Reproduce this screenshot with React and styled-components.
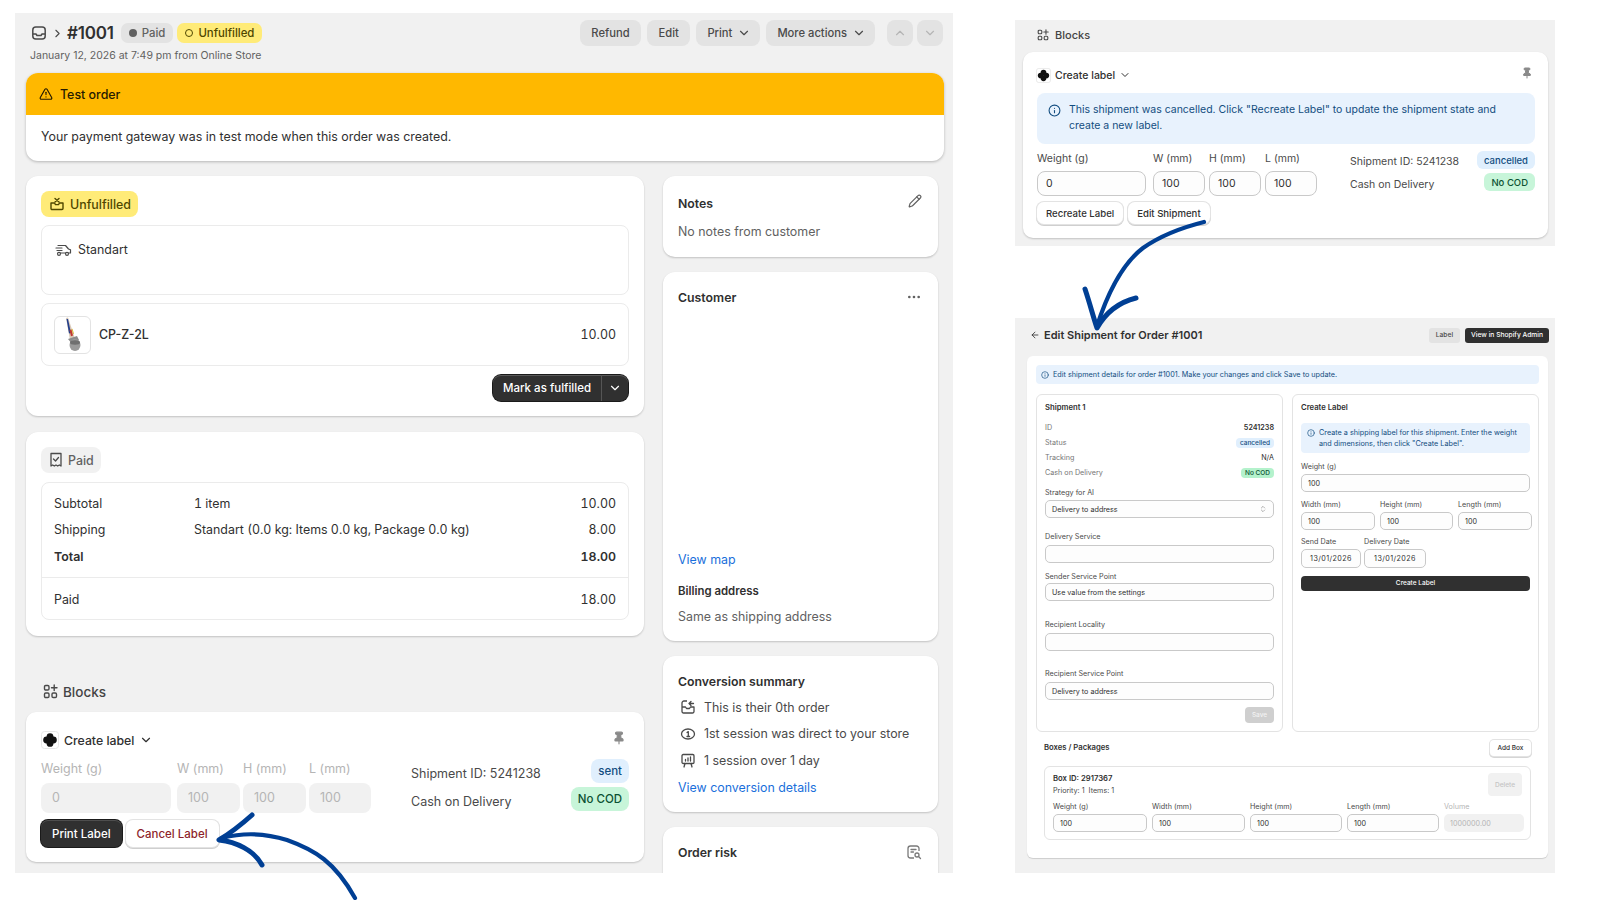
import React from 'react'
import styled, { createGlobalStyle } from 'styled-components'
import {
  ArrowLeft,
  ChevronDown,
  ChevronRight,
  ChevronUp,
  ChevronsUpDown,
  Ellipsis,
  Info,
  Pencil,
  Pin,
  TriangleAlert,
} from 'lucide-react'

const GlobalStyle = createGlobalStyle`
  html, body {
    margin: 0;
    background: #fff;
    overflow: hidden;
  }
  * {
    box-sizing: border-box;
  }
  body {
    font-family: Inter, "Noto Sans", "Liberation Sans", sans-serif;
    color: #303030;
  }
`

const Page = styled.div`
  position: relative;
  width: 1600px;
  height: 900px;
  display: flex;
  padding: 13px 0 0 15px;
`
const OrderShot = styled.div`
  width: 938px;
  height: 860px;
  background: #f1f1f1;
  padding: 7px 9px 0 11px;
  overflow: hidden;
`
const Topbar = styled.div`
  display: flex;
  align-items: flex-start;
  justify-content: space-between;
  height: 53px;
`
const TitleRow = styled.div`
  display: flex;
  align-items: center;
  height: 26px;
  padding-left: 4px;
  color: #4a4a4a;
`
const OrderNo = styled.span`
  font-size: 17px;
  font-weight: 600;
  letter-spacing: -0.2px;
  color: #303030;
  margin: 0 7px 0 3px;
`
const Pill = styled.span`
  display: inline-flex;
  align-items: center;
  gap: 5px;
  height: 20px;
  padding: 0 8px;
  margin-right: 4px;
  border-radius: 7px;
  font-size: 11.4px;
  font-weight: 500;
  background: ${p => (p.$yellow ? '#ffeb78' : '#e3e3e3')};
  color: ${p => (p.$yellow ? '#4f4700' : '#616161')};
`
const Dot = styled.i`
  width: 8px;
  height: 8px;
  border-radius: 50%;
  background: ${p => (p.$ring ? 'transparent' : '#616161')};
  border: ${p => (p.$ring ? '1.6px solid #4f4700' : 'none')};
`
const Meta = styled.div`
  font-size: 10.5px;
  color: #616161;
  padding-left: 4px;
  margin-top: 3px;
`
const Actions = styled.div`
  display: flex;
  gap: 6px;
  padding-right: 1px;
`
const ActionBtn = styled.span`
  display: inline-flex;
  align-items: center;
  justify-content: center;
  gap: 5px;
  height: 26px;
  padding: ${p => (p.$icon ? '0' : p.$menu ? '0 9px 0 11px' : '0 11.5px')};
  width: ${p => (p.$icon ? '26px' : 'auto')};
  margin-left: ${p => p.$ml || '0'};
  border-radius: 8px;
  background: #e3e3e3;
  font-size: 11.2px;
  font-weight: 550;
  color: ${p => (p.$icon ? '#b5b5b5' : '#4a4a4a')};
`
const Banner = styled.div`
  width: 918px;
  border-radius: 12px;
  background: #fff;
  overflow: hidden;
  box-shadow: 0 1px 3px rgba(0, 0, 0, 0.25);
`
const BannerHead = styled.div`
  display: flex;
  align-items: center;
  gap: 7px;
  height: 42px;
  padding-left: 13px;
  background: #ffb800;
  font-size: 12.4px;
  font-weight: 550;
  color: #251a00;
`
const BannerBody = styled.div`
  height: 46px;
  padding-top: 14px;
  font-size: 12.4px;
  padding-left: 15px;
`
const Columns = styled.div`
  display: flex;
  gap: 19px;
  margin-top: 15px;
`
const Main = styled.div`
  width: 618px;
`
const Side = styled.div`
  width: 275px;
  display: flex;
  flex-direction: column;
  gap: 15px;
`
const Card = styled.div`
  background: #fff;
  border-radius: 12px;
  box-shadow: 0 1px 2px rgba(0, 0, 0, 0.2);
  padding: ${p => p.$pad || '15px'};
  height: ${p => p.$h || 'auto'};
  margin-bottom: ${p => p.$mb || '0'};
`
const StatusTag = styled.div`
  display: inline-flex;
  align-items: center;
  gap: 5px;
  height: 26px;
  padding: 0 7px 0 8px;
  border-radius: 8px;
  font-size: 12.4px;
  font-weight: 500;
  background: ${p => (p.$yellow ? '#ffeb78' : '#f1f1f1')};
  color: ${p => (p.$yellow ? '#4f4700' : '#616161')};
`
const Inset = styled.div`
  border: 1px solid #ebebeb;
  border-radius: 8px;
  margin-top: ${p => p.$mt || '8px'};
  height: ${p => p.$h || 'auto'};
  font-size: 12.4px;
`
const ShipMethod = styled.div`
  display: flex;
  align-items: center;
  gap: 6px;
  padding: 16px 0 0 13px;
`
const ItemRow = styled.div`
  display: flex;
  align-items: center;
  height: 100%;
  padding: 0 12px;
  font-weight: 500;
`
const Thumb = styled.div`
  width: 37px;
  height: 38px;
  border: 1px solid #e3e3e3;
  border-radius: 6px;
  margin-right: 8px;
  display: flex;
  align-items: center;
  justify-content: center;
`
const Amount = styled.span`
  margin-left: auto;
  font-weight: 400;
  font-variant-numeric: tabular-nums;
`
const FulfilWrap = styled.div`
  display: flex;
  justify-content: flex-end;
  margin-top: 9px;
  padding-right: 1px;
`
const SplitBtn = styled.div`
  display: flex;
  align-items: center;
  height: 26px;
  width: 135px;
  border-radius: 8px;
  background: #303030;
  color: #fff;
  font-size: 11.5px;
  font-weight: 550;
  box-shadow: 0 0 0 1px #1a1a1a, inset 0 1px 0 rgba(255, 255, 255, 0.2);
`
const SplitLabel = styled.span`
  flex: 1;
  text-align: center;
  border-right: 1px solid #555;
  line-height: 26px;
`
const SplitCaret = styled.span`
  width: 26px;
  display: flex;
  justify-content: center;
`
const TotalRow = styled.div`
  display: grid;
  grid-template-columns: 140px 1fr auto;
  align-items: center;
  height: 26.5px;
  padding: 0 12px;
  font-weight: ${p => (p.$bold ? 600 : 400)};
  font-variant-numeric: tabular-nums;
`
const TotalsTop = styled.div`
  padding: 7px 0;
  border-bottom: 1px solid #ebebeb;
`
const TotalsBottom = styled.div`
  padding: 9px 0 6px;
`
const BlocksHead = styled.div`
  display: flex;
  align-items: center;
  gap: ${p => (p.$small ? '6px' : '5px')};
  height: ${p => (p.$small ? '32px' : '41px')};
  padding-left: ${p => (p.$small ? '14px' : '17px')};
  padding-bottom: ${p => (p.$small ? '3px' : '0')};
  font-size: ${p => (p.$small ? '11px' : '13.5px')};
  font-weight: 500;
  color: #444;
`
const BlockTop = styled.div`
  display: flex;
  align-items: center;
  height: 20px;
  gap: ${p => (p.$big ? '5px' : '4px')};
  margin-left: ${p => (p.$big ? '0' : '-1px')};
  font-size: ${p => (p.$big ? '12.3px' : '10.5px')};
  font-weight: 500;
`
const PinSlot = styled.span`
  margin-left: auto;
  margin-right: ${p => (p.$big ? '3px' : '2px')};
  margin-top: -4px;
  display: flex;
  color: #8a8a8a;
`
const Notice = styled.div`
  display: flex;
  gap: ${p => (p.$tiny ? '4px' : '8px')};
  margin-top: ${p => p.$mt || '0'};
  padding: ${p => p.$pad || '9px 12px 7px 11px'};
  min-height: ${p => p.$h || '0'};
  background: #e8f2fd;
  border-radius: ${p => (p.$tiny ? '4px' : '8px')};
  color: #124d80;
  font-size: ${p => (p.$tiny ? '7.25px' : '10.5px')};
  line-height: ${p => (p.$tiny ? '11px' : '16px')};
`
const FormRow = styled.div`
  display: flex;
  justify-content: space-between;
  margin-top: ${p => (p.$big ? '10px' : '8px')};
`
const DimGrid = styled.div`
  display: grid;
  grid-template-columns: ${p => (p.$big ? '133px 63px 63px 62px' : '112px 52px 52px 52px')};
  column-gap: ${p => (p.$big ? '3px' : '4px')};
  & > *:first-child {
    padding-right: 3px;
  }
`
const FieldLabel = styled.div`
  font-size: ${p => (p.$big ? '12.5px' : '10.5px')};
  line-height: ${p => (p.$big ? '18px' : '14px')};
  margin-bottom: 5px;
  color: ${p => (p.$off ? '#b5b5b5' : '#4a4a4a')};
`
const DimBox = styled.div`
  height: ${p => (p.$big ? '30px' : '25px')};
  line-height: ${p => (p.$big ? '30px' : '23px')};
  padding-left: ${p => (p.$big ? '11px' : '8px')};
  border-radius: 8px;
  font-size: ${p => (p.$big ? '12.5px' : '10.5px')};
  background: ${p => (p.$off ? '#f1f1f1' : '#fdfdfd')};
  color: ${p => (p.$off ? '#b5b5b5' : '#303030')};
  border: ${p => (p.$off ? 'none' : '1px solid #c9c9c9')};
`
const Buttons = styled.div`
  display: flex;
  gap: ${p => (p.$big ? '4px' : '5px')};
  margin-top: ${p => (p.$big ? '7px' : '6px')};
`
const PlainBtn = styled.span`
  display: inline-flex;
  align-items: center;
  justify-content: center;
  height: ${p => (p.$big ? '27px' : '22px')};
  padding: 0 ${p => (p.$big ? '11px' : '9px')};
  border-radius: 7px;
  font-size: ${p => (p.$big ? '11.5px' : '9.6px')};
  font-weight: 500;
  background: ${p => (p.$dark ? '#303030' : '#fff')};
  color: ${p => (p.$dark ? '#fff' : p.$danger ? '#8e1f2b' : '#303030')};
  box-shadow: ${p =>
    p.$dark
      ? '0 0 0 1px #1a1a1a, inset 0 1px 0 rgba(255,255,255,.15)'
      : '0 0 0 1px #e3e3e3, 0 1px 0 1px #cfcfcf'};
`
const ShipInfo = styled.div`
  width: ${p => (p.$big ? '218px' : '185px')};
  display: flex;
  flex-direction: column;
  gap: 4px;
  margin-top: -1px;
  font-size: ${p => (p.$big ? '12.5px' : '10.5px')};
  color: #4a4a4a;
`
const ShipLine = styled.div`
  display: flex;
  align-items: center;
  justify-content: space-between;
`
const ShipText = styled.span`
  padding-top: ${p => p.$drop || '0'};
`
const Badge = styled.span`
  display: inline-flex;
  align-items: center;
  height: ${p => (p.$big ? '24px' : '18px')};
  padding: 0 7px;
  border-radius: ${p => (p.$big ? '8px' : '6px')};
  font-size: ${p => (p.$big ? '11.5px' : '9.5px')};
  font-weight: 500;
  background: ${p => (p.$green ? '#c7f5d9' : '#e0effd')};
  color: ${p => (p.$green ? '#0c5132' : '#124d80')};
`
const CardHead = styled.div`
  display: flex;
  align-items: center;
  justify-content: space-between;
  font-size: 12.3px;
  font-weight: 600;
  height: 20px;
  color: #303030;
`
const HeadIcon = styled.span`
  display: flex;
  color: #616161;
  margin-right: 1px;
  margin-top: ${p => p.$mt || '0'};
`
const Muted = styled.div`
  font-size: 12.4px;
  color: #616161;
  margin-top: ${p => p.$mt || '9px'};
`
const LinkText = styled.div`
  font-size: 12.4px;
  color: #1a6fdb;
  margin-top: ${p => p.$mt || '0'};
`
const SubTitle = styled.div`
  font-size: 11.4px;
  font-weight: 600;
  margin-top: ${p => p.$mt || '0'};
`
const ConvRows = styled.div`
  margin-top: 3px;
`
const ConvRow = styled.div`
  display: flex;
  align-items: center;
  gap: 8px;
  height: 26.5px;
  padding-left: 2px;
  font-size: 12.4px;
  color: #4a4a4a;
`
const RightCol = styled.div`
  width: 540px;
  margin: 7px 0 0 62px;
  display: flex;
  flex-direction: column;
  gap: 72px;
`
const BlockShot = styled.div`
  background: #f1f1f1;
  height: 226px;
  padding: 0 7px 0 8px;
`
const EditShot = styled.div`
  background: #f1f1f1;
  height: 555px;
  padding: 0 6px 0 12px;
`
const BlockCard = styled(Card)`
  padding: ${p => (p.$big ? '18px 15px 0' : '13px 13px 0 14px')};
  height: ${p => (p.$big ? '150px' : '186px')};
  border-radius: 10px;
`
const EditHead = styled.div`
  display: flex;
  align-items: center;
  height: 38px;
  padding: 0 0 4px 3px;
  font-size: 11px;
  font-weight: 600;
  gap: 4px;
  color: #303030;
`
const EditActions = styled.div`
  margin-left: auto;
  display: flex;
  gap: 5px;
`
const TinyBtn = styled.span`
  display: inline-flex;
  align-items: center;
  justify-content: center;
  height: 15px;
  padding: 0 ${p => (p.$dark ? '6px' : '7px')};
  border-radius: 3px;
  font-size: 6.7px;
  font-weight: 500;
  background: ${p => (p.$dark ? '#303030' : '#e3e3e3')};
  color: ${p => (p.$dark ? '#fff' : '#4a4a4a')};
`
const EditCard = styled.div`
  background: #fff;
  border-radius: 6px;
  width: 521px;
  height: 502px;
  padding: 9px;
  box-shadow: 0 1px 1px rgba(0, 0, 0, 0.15);
`
const SubGrid = styled.div`
  display: grid;
  grid-template-columns: 247px 247px;
  gap: 9px;
  margin-top: 10px;
`
const SubCard = styled.div`
  height: 338px;
  border: 1px solid #e3e3e3;
  border-radius: 6px;
  padding: 8px 8px 0;
`
const TinyTitle = styled.div`
  font-size: 7.7px;
  font-weight: 600;
  line-height: 10px;
  color: #303030;
  margin-top: ${p => p.$mt || '0'};
`
const Spec = styled.div`
  display: flex;
  justify-content: space-between;
  align-items: center;
  height: 15px;
  font-size: 7.2px;
  color: #757575;
`
const SpecValue = styled.span`
  color: #303030;
  font-weight: ${p => (p.$bold ? 600 : 400)};
`
const TinyBadge = styled.span`
  display: inline-flex;
  align-items: center;
  height: 10px;
  padding: 0 4px;
  border-radius: 4px;
  font-size: 6.5px;
  font-weight: 500;
  background: ${p => (p.$green ? '#b4f2cc' : '#e0effd')};
  color: ${p => (p.$green ? '#0c5132' : '#124d80')};
`
const TinyLabel = styled.div`
  font-size: 7.2px;
  line-height: 10px;
  color: ${p => (p.$off ? '#b5b5b5' : '#4a4a4a')};
  margin-top: ${p => p.$mt || '0'};
`
const TinyInput = styled.div`
  display: flex;
  align-items: center;
  justify-content: ${p => (p.$center ? 'center' : 'space-between')};
  height: ${p => p.$h || '18px'};
  margin-top: ${p => p.$mt || '2px'};
  padding: 0 6px;
  border: ${p => (p.$off ? 'none' : '1px solid #c9c9c9')};
  background: ${p => (p.$off ? '#f1f1f1' : '#fdfdfd')};
  color: ${p => (p.$off ? '#b5b5b5' : '#303030')};
  border-radius: 5px;
  font-size: 7.2px;
  letter-spacing: ${p => (p.$center ? '0.4px' : '0')};
`
const SaveRow = styled.div`
  display: flex;
  justify-content: flex-end;
  margin-top: 7px;
`
const SaveBtn = styled.span`
  display: inline-flex;
  align-items: center;
  justify-content: center;
  width: 29px;
  height: 16px;
  border-radius: 4px;
  background: #cfcfcf;
  color: #f3f3f3;
  font-size: 6.5px;
  font-weight: 500;
`
const Thirds = styled.div`
  display: grid;
  grid-template-columns: ${p => p.$cols};
  gap: ${p => p.$gap || '5px'};
  margin-top: ${p => p.$mt || '0'};
`
const CreateBtn = styled.div`
  height: 15px;
  margin-top: 8px;
  border-radius: 4px;
  background: #303030;
  color: #fff;
  font-size: 6.5px;
  font-weight: 500;
  line-height: 15px;
  text-align: center;
`
const BoxesHead = styled.div`
  display: flex;
  align-items: center;
  justify-content: space-between;
  margin: 8px 8px 10px;
  height: 16px;
`
const AddBtn = styled.span`
  display: inline-flex;
  align-items: center;
  height: 16px;
  padding: 0 7.5px;
  border-radius: 4px;
  background: #fff;
  box-shadow: 0 0 0 1px #e3e3e3, 0 1px 0 1px #d5d5d5;
  font-size: 6.5px;
  font-weight: 500;
`
const BoxCard = styled.div`
  margin: 0 8px;
  height: 74px;
  border: 1px solid #e3e3e3;
  border-radius: 6px;
  padding: 6px 8px;
`
const BoxTop = styled.div`
  display: flex;
  justify-content: space-between;
  height: 24px;
`
const BoxMeta = styled.div`
  padding-top: 1px;
`
const DeleteBtn = styled.span`
  display: inline-flex;
  align-items: center;
  justify-content: center;
  width: 34px;
  height: 23px;
  border-radius: 4px;
  background: #f1f1f1;
  color: #c4c4c4;
  font-size: 6.5px;
  font-weight: 500;
`
const ArrowLayer = styled.svg`
  position: absolute;
  left: 0;
  top: 0;
  width: 1600px;
  height: 900px;
  pointer-events: none;
`

const Order = () => (
  <svg width="18" height="18" viewBox="0 0 18 18" fill="none" stroke="currentColor" strokeWidth="1.5">
    <rect x="2.8" y="3" width="12.4" height="12" rx="3" />
    <path d="M3 10h3l1 1.5h4L12 10h3" strokeLinejoin="round" />
  </svg>
)
const FulfilIcon = () => (
  <svg width="16" height="16" viewBox="0 0 16 16" fill="none" stroke="currentColor" strokeWidth="1.4">
    <path d="M2 7h3.5l1 1.6h3L10.500 7H14v5.500a1 1 0 0 1-1 1H3a1 1 0 0 1-1-1z" strokeLinejoin="round" />
    <path d="M6 2.500l4 3.500M10 2.500L6 6" strokeLinecap="round" />
  </svg>
)
const TruckIcon = () => (
  <svg width="17" height="14" viewBox="0 0 17 14" fill="none" stroke="#4a4a4a" strokeWidth="1.2">
    <path d="M3 2.500h7.500l3 3.500 2 .8v3.200h-2M5.500 10h5M1 5h6M2 7.500h5" strokeLinecap="round" strokeLinejoin="round" />
    <circle cx="4" cy="10.8" r="1.5" />
    <circle cx="12" cy="10.8" r="1.5" />
  </svg>
)
const ReceiptIcon = () => (
  <svg width="14" height="16" viewBox="0 0 14 16" fill="none" stroke="#4a4a4a" strokeWidth="1.3">
    <path d="M2 1.500h10v12.500l-1.700-1-1.600 1-1.700-1-1.700 1-1.600-1-1.700 1z" strokeLinejoin="round" />
    <path d="M4.500 7l2 2 3-3.500" strokeLinecap="round" strokeLinejoin="round" />
  </svg>
)
const Apps = ({ size = 15 }) => (
  <svg width={size} height={size} viewBox="0 0 15 15" fill="none" stroke="#4a4a4a" strokeWidth="1.4">
    <rect x="1.5" y="1.5" width="4.5" height="4.5" rx="1.2" />
    <rect x="1.5" y="9" width="4.5" height="4.5" rx="1.2" />
    <rect x="9" y="9" width="4.5" height="4.5" rx="1.2" />
    <path d="M11.200 1v5.500M8.500 3.700H14" strokeLinecap="round" />
  </svg>
)
const CloverMark = ({ big }) => (
  <svg width={big ? 18 : 15} height={big ? 18 : 15} viewBox="0 0 18 18">
    <rect x="0.5" y="0.5" width="17" height="17" rx="3" fill="#fff" stroke="#e6e6e6" />
    <g fill="#111">
      <circle cx="9" cy="5.6" r="3.4" />
      <circle cx="9" cy="12.4" r="3.4" />
      <circle cx="5.6" cy="9" r="3.4" />
      <circle cx="12.4" cy="9" r="3.4" />
    </g>
  </svg>
)
const ReturnIcon = () => (
  <svg width="16" height="16" viewBox="0 0 16 16" fill="none" stroke="#4a4a4a" strokeWidth="1.3">
    <path d="M7 2H4a2 2 0 0 0-2 2v8.500a1.500 1.500 0 0 0 1.500 1.500h9a1.500 1.500 0 0 0 1.500-1.500V8h-3.500l-1 1.500h-3L5.500 8H2" strokeLinejoin="round" />
    <path d="M13.500 4.500H9M11 2.500L9 4.500l2 2" strokeLinecap="round" strokeLinejoin="round" />
  </svg>
)
const SessionIcon = () => (
  <svg width="16" height="14" viewBox="0 0 16 14" fill="none" stroke="#4a4a4a" strokeWidth="1.3">
    <ellipse cx="8" cy="7" rx="6.5" ry="5" />
    <path d="M7 5.500L8.300 4.600V9.500M7 9.500h2.600" strokeLinecap="round" strokeLinejoin="round" />
  </svg>
)
const BoardIcon = () => (
  <svg width="16" height="15" viewBox="0 0 15 15" fill="none" stroke="#4a4a4a" strokeWidth="1.3">
    <rect x="1.5" y="1.5" width="12" height="9" rx="1.2" />
    <path d="M5 8V6.500M7.500 8V5M10 8V3.800M4.500 10.500L3.500 14M10.500 10.500l1 3.500" strokeLinecap="round" />
  </svg>
)
const RiskIcon = () => (
  <svg width="16" height="16" viewBox="0 0 16 16" fill="none" stroke="#7a7a7a" strokeWidth="1.3">
    <path d="M8 14H4.500A2.500 2.500 0 0 1 2 11.500v-7A2.500 2.500 0 0 1 4.500 2h6A2.500 2.500 0 0 1 13 4.500V7" />
    <path d="M5 5.500h5M5 8h2.500" strokeLinecap="round" />
    <circle cx="11" cy="11" r="2" />
    <path d="M12.500 12.500L14.500 14.500" strokeLinecap="round" />
  </svg>
)
// the product photo: a thin nozzle on a grey threaded base
const Product = () => (
  <svg width="35" height="36" viewBox="0 0 35 36">
    <path d="M11 1l2-.5 7 21-5 1.500z" fill="#d9c9b8" />
    <path d="M11.500 2l1.500 0 3 14-2 .5z" fill="#23408e" />
    <path d="M14.500 13l2-.5 1.500 6-2 .8z" fill="#c2392f" />
    <path d="M16.500 12l1-.3 1.500 5-1 .4z" fill="#d8b93a" />
    <path d="M13 22l9-3 2 4-7 4z" fill="#8c8c8c" />
    <ellipse cx="20" cy="28" rx="5.500" ry="6" fill="#9a9a9a" />
    <ellipse cx="20" cy="25.500" rx="5" ry="2.200" fill="#6f6f6f" />
  </svg>
)

const dims = [
  ['W (mm)', '100'],
  ['H (mm)', '100'],
  ['L (mm)', '100'],
]

const ShipmentBlock = ({ big, cancelled }) => {
  const off = big
  const chevron = big ? 14 : 12
  return (
    <BlockCard $big={big}>
      <BlockTop $big={big}>
        <CloverMark big={big} />
        Create label
        <ChevronDown size={chevron} />
        <PinSlot $big={big}>
          <Pin size={big ? 14 : 12} fill="#8a8a8a" />
        </PinSlot>
      </BlockTop>
      {cancelled && (
        <Notice $mt="8px" $h="51px">
          <Info size={13} style={{ flexShrink: 0, marginTop: 2 }} />
          <span>
            This shipment was cancelled. Click "Recreate Label" to update the shipment state and create a new label.
          </span>
        </Notice>
      )}
      <FormRow $big={big}>
        <div>
          <DimGrid $big={big}>
            <div>
              <FieldLabel $big={big} $off={off}>Weight (g)</FieldLabel>
              <DimBox $big={big} $off={off}>0</DimBox>
            </div>
            {dims.map(([label, value]) => (
              <div key={label}>
                <FieldLabel $big={big} $off={off}>{label}</FieldLabel>
                <DimBox $big={big} $off={off}>{value}</DimBox>
              </div>
            ))}
          </DimGrid>
          <Buttons $big={big}>
            {cancelled ? (
              <>
                <PlainBtn>Recreate Label</PlainBtn>
                <PlainBtn>Edit Shipment</PlainBtn>
              </>
            ) : (
              <>
                <PlainBtn $big $dark>Print Label</PlainBtn>
                <PlainBtn $big $danger>Cancel Label</PlainBtn>
              </>
            )}
          </Buttons>
        </div>
        <ShipInfo $big={big}>
          <ShipLine>
            <ShipText $drop={big ? '5px' : '2px'}>Shipment ID: 5241238</ShipText>
            <Badge $big={big}>{cancelled ? 'cancelled' : 'sent'}</Badge>
          </ShipLine>
          <ShipLine>
            <ShipText $drop={big ? '4px' : '5px'}>Cash on Delivery</ShipText>
            <Badge $big={big} $green>No COD</Badge>
          </ShipLine>
        </ShipInfo>
      </FormRow>
    </BlockCard>
  )
}

const OrderPanel = () => (
  <OrderShot>
    <Topbar>
      <div>
        <TitleRow>
          <Order />
          <ChevronRight size={13} style={{ margin: '0 0 0 3px' }} />
          <OrderNo>#1001</OrderNo>
          <Pill><Dot />Paid</Pill>
          <Pill $yellow><Dot $ring />Unfulfilled</Pill>
        </TitleRow>
        <Meta>January 12, 2026 at 7:49 pm from Online Store</Meta>
      </div>
      <Actions>
        <ActionBtn>Refund</ActionBtn>
        <ActionBtn>Edit</ActionBtn>
        <ActionBtn $menu>Print <ChevronDown size={14} /></ActionBtn>
        <ActionBtn $menu>More actions <ChevronDown size={14} /></ActionBtn>
        <ActionBtn $icon $ml="6px"><ChevronUp size={14} /></ActionBtn>
        <ActionBtn $icon $ml="-2px"><ChevronDown size={14} /></ActionBtn>
      </Actions>
    </Topbar>
    <Banner>
      <BannerHead>
        <TriangleAlert size={14} />
        Test order
      </BannerHead>
      <BannerBody>Your payment gateway was in test mode when this order was created.</BannerBody>
    </Banner>
    <Columns>
      <Main>
        <Card $h="240px" $mb="16px">
          <StatusTag $yellow><FulfilIcon />Unfulfilled</StatusTag>
          <Inset $h="70px">
            <ShipMethod><TruckIcon />Standart</ShipMethod>
          </Inset>
          <Inset $h="63px">
            <ItemRow>
              <Thumb><Product /></Thumb>
              CP-Z-2L
              <Amount>10.00</Amount>
            </ItemRow>
          </Inset>
          <FulfilWrap>
            <SplitBtn>
              <SplitLabel>Mark as fulfilled</SplitLabel>
              <SplitCaret><ChevronDown size={14} /></SplitCaret>
            </SplitBtn>
          </FulfilWrap>
        </Card>
        <Card $h="204px">
          <StatusTag><ReceiptIcon />Paid</StatusTag>
          <Inset $mt="9px">
            <TotalsTop>
              <TotalRow><span>Subtotal</span><span>1 item</span><span>10.00</span></TotalRow>
              <TotalRow><span>Shipping</span><span>Standart (0.0 kg: Items 0.0 kg, Package 0.0 kg)</span><span>8.00</span></TotalRow>
              <TotalRow $bold><span>Total</span><span /><span>18.00</span></TotalRow>
            </TotalsTop>
            <TotalsBottom>
              <TotalRow><span>Paid</span><span /><span>18.00</span></TotalRow>
            </TotalsBottom>
          </Inset>
        </Card>
        <div style={{ height: 35 }} />
        <BlocksHead><Apps />Blocks</BlocksHead>
        <ShipmentBlock big />
      </Main>
      <Side>
        <Card $h="81px" $pad="17px 15px">
          <CardHead>Notes<HeadIcon $mt="-4px"><Pencil size={14} /></HeadIcon></CardHead>
          <Muted $mt="11px">No notes from customer</Muted>
        </Card>
        <Card $h="369px">
          <CardHead>Customer<HeadIcon><Ellipsis size={16} /></HeadIcon></CardHead>
          <LinkText $mt="245px">View map</LinkText>
          <SubTitle $mt="17px">Billing address</SubTitle>
          <Muted $mt="11px">Same as shipping address</Muted>
        </Card>
        <Card $h="156px" $pad="15px">
          <CardHead>Conversion summary</CardHead>
          <ConvRows>
            <ConvRow><ReturnIcon />This is their 0th order</ConvRow>
            <ConvRow><SessionIcon />1st session was direct to your store</ConvRow>
            <ConvRow><BoardIcon />1 session over 1 day</ConvRow>
          </ConvRows>
          <LinkText $mt="6px">View conversion details</LinkText>
        </Card>
        <Card $h="90px">
          <CardHead>Order risk<HeadIcon><RiskIcon /></HeadIcon></CardHead>
        </Card>
      </Side>
    </Columns>
  </OrderShot>
)

const boxFields = [
  ['Weight (g)', '100'],
  ['Width (mm)', '100'],
  ['Height (mm)', '100'],
  ['Length (mm)', '100'],
]

const EditPanel = () => (
  <EditShot>
    <EditHead>
      <ArrowLeft size={10} />
      Edit Shipment for Order #1001
      <EditActions>
        <TinyBtn>Label</TinyBtn>
        <TinyBtn $dark>View in Shopify Admin</TinyBtn>
      </EditActions>
    </EditHead>
    <EditCard>
      <Notice $tiny $pad="4px 5px" $h="19px">
        <Info size={8} style={{ flexShrink: 0, marginTop: 2 }} />
        Edit shipment details for order #1001. Make your changes and click Save to update.
      </Notice>
      <SubGrid>
        <SubCard>
          <TinyTitle>Shipment 1</TinyTitle>
          <div style={{ height: 7 }} />
          <Spec>ID<SpecValue $bold>5241238</SpecValue></Spec>
          <Spec>Status<TinyBadge>cancelled</TinyBadge></Spec>
          <Spec>Tracking<SpecValue>N/A</SpecValue></Spec>
          <Spec>Cash on Delivery<TinyBadge $green>No COD</TinyBadge></Spec>
          <TinyLabel $mt="8px">Strategy for AI</TinyLabel>
          <TinyInput>Delivery to address<ChevronsUpDown size={8} color="#8a8a8a" /></TinyInput>
          <TinyLabel $mt="14px">Delivery Service</TinyLabel>
          <TinyInput $mt="3px" />
          <TinyLabel $mt="9px">Sender Service Point</TinyLabel>
          <TinyInput $mt="1px">Use value from the settings</TinyInput>
          <TinyLabel $mt="19px">Recipient Locality</TinyLabel>
          <TinyInput $mt="3px" />
          <TinyLabel $mt="18px">Recipient Service Point</TinyLabel>
          <TinyInput $mt="3px">Delivery to address</TinyInput>
          <SaveRow><SaveBtn>Save</SaveBtn></SaveRow>
        </SubCard>
        <SubCard>
          <TinyTitle>Create Label</TinyTitle>
          <Notice $tiny $mt="10px" $pad="4px 4px 4px 6px" $h="30px">
            <Info size={8} style={{ flexShrink: 0, marginTop: 2 }} />
            <span>
              Create a shipping label for this shipment. Enter the weight and dimensions, then click "Create Label".
            </span>
          </Notice>
          <TinyLabel $mt="9px">Weight (g)</TinyLabel>
          <TinyInput>100</TinyInput>
          <Thirds $cols="74px 73px 74px" $mt="8px">
            <div><TinyLabel>Width (mm)</TinyLabel><TinyInput>100</TinyInput></div>
            <div><TinyLabel>Height (mm)</TinyLabel><TinyInput>100</TinyInput></div>
            <div><TinyLabel>Length (mm)</TinyLabel><TinyInput>100</TinyInput></div>
          </Thirds>
          <Thirds $cols="60px 62px" $gap="3px" $mt="7px">
            <div><TinyLabel>Send Date</TinyLabel><TinyInput $center $h="19px">13/01/2026</TinyInput></div>
            <div><TinyLabel>Delivery Date</TinyLabel><TinyInput $center $h="19px">13/01/2026</TinyInput></div>
          </Thirds>
          <CreateBtn>Create Label</CreateBtn>
        </SubCard>
      </SubGrid>
      <BoxesHead>
        <TinyTitle>Boxes / Packages</TinyTitle>
        <AddBtn>Add Box</AddBtn>
      </BoxesHead>
      <BoxCard>
        <BoxTop>
          <BoxMeta>
            <TinyTitle>Box ID: 2917367</TinyTitle>
            <TinyLabel $mt="2px">Priority: 1&nbsp; Items: 1</TinyLabel>
          </BoxMeta>
          <DeleteBtn>Delete</DeleteBtn>
        </BoxTop>
        <Thirds $cols="94px 93px 92px 92px 80px" $gap="5px" $mt="5px">
          {boxFields.map(([label, value]) => (
            <div key={label}>
              <TinyLabel>{label}</TinyLabel>
              <TinyInput>{value}</TinyInput>
            </div>
          ))}
          <div>
            <TinyLabel $off>Volume</TinyLabel>
            <TinyInput $off>1000000.00</TinyInput>
          </div>
        </Thirds>
      </BoxCard>
    </EditCard>
  </EditShot>
)

const App = () => (
  <>
    <GlobalStyle />
    <Page>
      <OrderPanel />
      <RightCol>
        <BlockShot>
          <BlocksHead $small><Apps size={12} />Blocks</BlocksHead>
          <ShipmentBlock cancelled />
        </BlockShot>
        <EditPanel />
      </RightCol>
      <ArrowLayer viewBox="0 0 1600 900" fill="none" stroke="#003f94" strokeLinecap="round" strokeLinejoin="round">
        <path d="M355 898C335 862 315 850 287 840C265 833 245 832 222 838" strokeWidth="4.2" />
        <path d="M252 815C242 824 232 832 219 840C236 842 254 850 262 865" strokeWidth="5" />
        <path d="M1204 222C1180 228 1160 236 1143 248C1122 264 1108 292 1097 326" strokeWidth="4.2" />
        <path d="M1085 289C1090 304 1093 316 1097 328C1106 312 1120 302 1136 298" strokeWidth="5" />
      </ArrowLayer>
    </Page>
  </>
)

export default App
